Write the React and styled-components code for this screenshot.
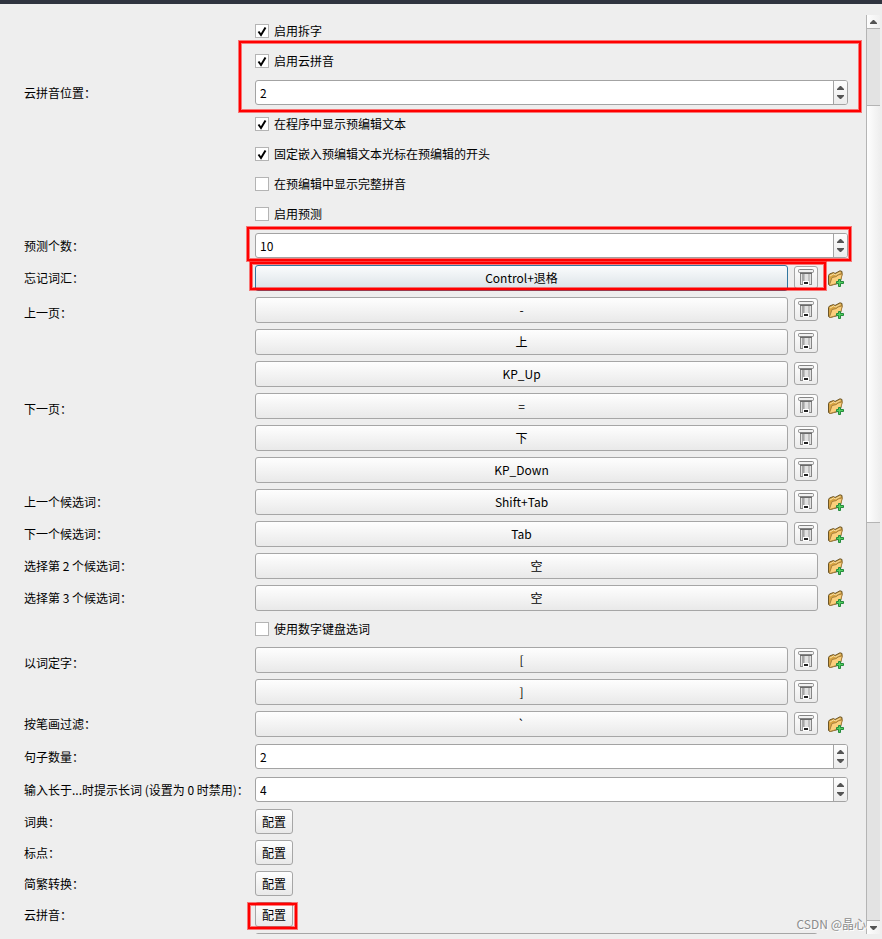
import React, { useState } from "react";
import styled, { createGlobalStyle } from "styled-components";

const rows = [
    { type: "check", text: "启用拆字", checked: true },
    { type: "check", text: "启用云拼音", checked: true },
    { type: "spin", label: "云拼音位置：", value: "2", mark: { top: -35, right: -13, bottom: -3, left: -16 } },
    { type: "check", text: "在程序中显示预编辑文本", checked: true },
    { type: "check", text: "固定嵌入预编辑文本光标在预编辑的开头", checked: true },
    { type: "check", text: "在预编辑中显示完整拼音", checked: false },
    { type: "check", text: "启用预测", checked: false },
    { type: "spin", label: "预测个数：", value: "10", mark: { top: -2, right: -3, bottom: 1, left: -8 } },
    { type: "keys", label: "忘记词汇：", keys: ["Control+退格"], active: true, mark: { top: 0, right: 22, bottom: 4, left: -5 } },
    { type: "keys", label: "上一页：", keys: ["-", "上", "KP_Up"] },
    { type: "keys", label: "下一页：", keys: ["=", "下", "KP_Down"] },
    { type: "keys", label: "上一个候选词：", keys: ["Shift+Tab"] },
    { type: "keys", label: "下一个候选词：", keys: ["Tab"] },
    { type: "keys", label: "选择第 2 个候选词：", keys: [], placeholder: "空" },
    { type: "keys", label: "选择第 3 个候选词：", keys: [], placeholder: "空" },
    { type: "check", text: "使用数字键盘选词", checked: false },
    { type: "keys", label: "以词定字：", keys: ["[", "]"] },
    { type: "keys", label: "按笔画过滤：", keys: ["`"] },
    { type: "spin", label: "句子数量：", value: "2" },
    { type: "spin", label: "输入长于...时提示长词 (设置为 0 时禁用)：", value: "4" },
    { type: "config", label: "词典：" },
    { type: "config", label: "标点：" },
    { type: "config", label: "简繁转换：" },
    { type: "config", label: "云拼音：", mark: { top: 1, right: -4, bottom: -2, left: -7 } },
    { type: "keys", keys: [] },
];

const Arrow = ({ down }) => (
    <svg width="7" height="4" viewBox="0 0 7 4" aria-hidden="true">
        <path d={down ? "M0 0H7V1L4 4H3L0 1Z" : "M0 4H7V3L4 0H3L0 3Z"} fill="#555" />
    </svg>
);

const TrashIcon = () => (
    <svg width="16" height="17" viewBox="0 0 16 17" aria-hidden="true">
        <path d="M2 4H14V16H2Z" fill="#e2e2e2" />
        <path d="M2 4H3V16H2ZM13 4H14V16H13Z" fill="#858585" />
        <path d="M4 4H6V15H4Z" fill="#a6a6a6" />
        <path d="M6 4H7V15H6ZM10 4H12V15H10Z" fill="#c0c0c0" />
        <path d="M2 15H14V16H2Z" fill="#8a8a8a" />
        <path d="M5 12H11V16H5Z" fill="#fff" />
        <path d="M6 13H10V15H6Z" fill="#222" />
        <rect x="0.5" y="0.5" width="15" height="3" rx="1" fill="#f1f1f1" stroke="#858585" />
        <path d="M2 4.5H14" stroke="#6a6a6a" />
    </svg>
);

const FolderIcon = () => (
    <svg width="16" height="17" viewBox="0 0 16 17" aria-hidden="true">
        <path d="M0.5 14.5V5.5L1.5 4L5.5 2.5L7 3.5L12 0.8L14 1.5V4L12 13L2 15.5Z" fill="#d9a441" stroke="#6b5527" />
        <path d="M1.5 14.8L4 7.5L8.5 6.5L10 5L14.4 3.8L12 12.5L2.5 15.3Z" fill="#fbcf7c" stroke="#a8813c" />
        <path d="M2 6L5.5 4L7.5 4.8L12.5 2.3" fill="none" stroke="#f6e0a8" />
        <path d="M10.5 9.5H12.5V11.5H15.5V13.5H12.5V16.5H10.5V13.5H8.5V11.5H10.5Z" fill="#4fd05f" stroke="#258a3c" />
    </svg>
);

const CheckField = ({ text, checked }) => {
    const [on, setOn] = useState(checked);
    return (
        <CheckLabel>
            <CheckBox>
                <CheckInput type="checkbox" checked={on} onChange={() => setOn(!on)} />
                {on && (
                    <Tick viewBox="0 0 14 14" aria-hidden="true">
                        <path d="M3.5 7.5L6 11L10.5 3.5" fill="none" stroke="#000" strokeWidth="2" />
                    </Tick>
                )}
            </CheckBox>
            {text}
        </CheckLabel>
    );
};

const SpinField = ({ id, value, mark }) => (
    <SpinWrap>
        <Spin>
            <SpinInput id={id} type="text" defaultValue={value} />
            <SpinButtons>
                <SpinButton aria-label="增加"><Arrow /></SpinButton>
                <SpinButton aria-label="减少"><Arrow down /></SpinButton>
            </SpinButtons>
        </Spin>
        {mark && <Mark $at={mark} />}
    </SpinWrap>
);

const KeysField = ({ keys, placeholder, active, mark }) => (
    <KeysWrap>
        <KeyList>
            {keys.length === 0 && <KeyRow><KeyButton>{placeholder}</KeyButton></KeyRow>}
            {keys.map((item) => (
                <KeyRow key={item}>
                    <KeyButton $active={active}>{item}</KeyButton>
                    <TrashButton aria-label="删除"><TrashIcon /></TrashButton>
                </KeyRow>
            ))}
        </KeyList>
        <AddButton aria-label="添加"><FolderIcon /></AddButton>
        {mark && <Mark $at={mark} />}
    </KeysWrap>
);

const Field = ({ row, id }) => {
    if (row.type === "check") return <CheckField {...row} />;
    if (row.type === "spin") return <SpinField id={id} {...row} />;
    if (row.type === "keys") return <KeysField {...row} />;
    return (
        <ConfigWrap>
            <ConfigBox>
                <ConfigButton id={id}>配置</ConfigButton>
                {row.mark && <Mark $at={row.mark} />}
            </ConfigBox>
        </ConfigWrap>
    );
};

const App = () => {
    return (
        <Frame lang="zh-CN">
            <GlobalStyle />
            <TitleBar />
            <Body>
                <Viewport>
                    {rows.map((row, i) => (
                        <Row key={i}>
                            <LabelCell $type={row.type} $multi={row.type === "keys" && row.keys.length > 1}>
                                {row.type === "keys" ? row.label : row.label && <label htmlFor={`field-${i}`}>{row.label}</label>}
                            </LabelCell>
                            <Field row={row} id={`field-${i}`} />
                        </Row>
                    ))}
                </Viewport>
                <ScrollBar>
                    <ScrollButton aria-label="向上滚动"><Arrow /></ScrollButton>
                    <Trough>
                        <TroughPart $grow={76} />
                        <Thumb $grow={417} />
                        <TroughPart $grow={398} />
                    </Trough>
                    <ScrollButton $bottom aria-label="向下滚动"><Arrow down /></ScrollButton>
                </ScrollBar>
            </Body>
            <Watermark>CSDN @晶心</Watermark>
        </Frame>
    );
};

export default App;

const GlobalStyle = createGlobalStyle`
    * {
        box-sizing: border-box;
    }
    body {
        margin: 0;
        background: #eee;
    }
    body, button, input {
        color: #000;
        font-family: "Noto Sans CJK SC", sans-serif;
        font-size: 12px;
    }
    button {
        padding: 0;
    }
`;

const Frame = styled.div`
    position: relative;
    display: flex;
    flex-direction: column;
    height: 100vh;
    overflow: hidden;
`;

const TitleBar = styled.div`
    flex: none;
    height: 4px;
    background: #2f343f;
`;

const Body = styled.div`
    display: flex;
    flex: 1;
    min-height: 0;
    padding: 11px 2px 5px 0;
`;

const Viewport = styled.main`
    flex: 1;
    min-width: 0;
    overflow: hidden;
    padding: 1px 18px 0 24px;
`;

const Row = styled.div`
    display: grid;
    grid-template-columns: 231px minmax(0, 1fr);
`;

const lineHeights = { check: 30, spin: 33, keys: 32, config: 31 };

const LabelCell = styled.div`
    line-height: ${(props) => lineHeights[props.$type]}px;
    padding-top: ${(props) => (props.$multi ? 3 : 0)}px;
    white-space: nowrap;
`;

const CheckLabel = styled.label`
    display: flex;
    align-items: center;
    gap: 5px;
    height: 30px;
    line-height: 30px;
`;

const CheckBox = styled.span`
    display: grid;
    width: 14px;
    height: 14px;
`;

const CheckInput = styled.input`
    grid-area: 1 / 1;
    appearance: none;
    margin: 0;
    width: 14px;
    height: 14px;
    border: 1px solid #b4b4b4;
    background: #fff;
`;

const Tick = styled.svg`
    grid-area: 1 / 1;
    z-index: 1;
    width: 14px;
    height: 14px;
    pointer-events: none;
`;

const SpinWrap = styled.div`
    position: relative;
    padding: 4px 0;
`;

const Spin = styled.div`
    display: flex;
    height: 25px;
    border: 1px solid #a3a3a3;
    border-radius: 3px;
    background: #fff;
    overflow: hidden;
`;

const SpinInput = styled.input`
    flex: 1;
    min-width: 0;
    border: 0;
    outline: 0;
    padding: 0 4px;
    background: transparent;
`;

const SpinButtons = styled.div`
    display: flex;
    flex-direction: column;
    width: 14px;
    padding: 2px 0;
    border-left: 1px solid #a3a3a3;
    background: linear-gradient(#fdfdfd, #ececec);
`;

const SpinButton = styled.button`
    display: flex;
    flex: 1;
    align-items: center;
    justify-content: center;
    border: 0;
    background: none;
`;

const KeysWrap = styled.div`
    position: relative;
    display: flex;
    align-items: flex-start;
    gap: 6px;
`;

const KeyList = styled.div`
    flex: 1;
    min-width: 0;
`;

const KeyRow = styled.div`
    display: flex;
    align-items: center;
    gap: 6px;
    height: 32px;
`;

const KeyButton = styled.button`
    flex: 1;
    height: 26px;
    line-height: 24px;
    border: 1px solid ${(props) => (props.$active ? "#33779f" : "#a6a6a6")};
    border-radius: 3px;
    background: ${(props) => (props.$active ? "linear-gradient(#fbfcfd, #d9e1e6)" : "linear-gradient(#fefefe, #e9e9e9)")};
`;

const TrashButton = styled.button`
    display: flex;
    align-items: center;
    justify-content: center;
    width: 24px;
    height: 23px;
    margin-bottom: 1px;
    border: 1px solid #a6a6a6;
    border-radius: 3px;
    background: linear-gradient(#fefefe, #ebebeb);
`;

const AddButton = styled.button`
    display: flex;
    align-items: center;
    justify-content: center;
    width: 24px;
    height: 32px;
    border: 0;
    background: none;
`;

const ConfigWrap = styled.div`
    padding: 3px 0;
`;

const ConfigBox = styled.div`
    position: relative;
    width: 38px;
`;

const ConfigButton = styled.button`
    display: block;
    width: 100%;
    height: 25px;
    border: 1px solid #a6a6a6;
    border-radius: 3px;
    background: linear-gradient(#fefefe, #e9e9e9);
`;

/* red frame drawn over a field */
const Mark = styled.div`
    position: absolute;
    z-index: 2;
    top: ${(props) => props.$at.top}px;
    right: ${(props) => props.$at.right}px;
    bottom: ${(props) => props.$at.bottom}px;
    left: ${(props) => props.$at.left}px;
    border: 2px solid #f00;
    box-shadow: 0 0 0 1px rgba(255, 0, 0, 0.5), inset 0 0 0 1px rgba(255, 0, 0, 0.5);
    pointer-events: none;
`;

const ScrollBar = styled.div`
    display: flex;
    flex-direction: column;
    width: 14px;
    border-left: 1px solid #b4b4b4;
`;

const ScrollButton = styled.button`
    display: flex;
    flex: none;
    align-items: center;
    justify-content: center;
    height: 14px;
    border: 0;
    border-top: ${(props) => (props.$bottom ? "1px solid #b4b4b4" : "0")};
    border-bottom: ${(props) => (props.$bottom ? "0" : "1px solid #b4b4b4")};
    background: linear-gradient(90deg, #fdfdfd, #f0f0f0);
`;

const Trough = styled.div`
    display: flex;
    flex: 1;
    flex-direction: column;
`;

const TroughPart = styled.div`
    flex: ${(props) => props.$grow} 0 0;
    background: #e3e3e3;
`;

const Thumb = styled.div`
    flex: ${(props) => props.$grow} 0 0;
    border: 1px solid #b4b4b4;
    border-width: 1px 0;
    background: linear-gradient(90deg, #fefefe, #eeeeee);
`;

const Watermark = styled.div`
    position: absolute;
    right: 16px;
    bottom: 6px;
    color: #8c8c8c;
    line-height: 18px;
    text-shadow: 1px 1px 0 #fff;
`;
